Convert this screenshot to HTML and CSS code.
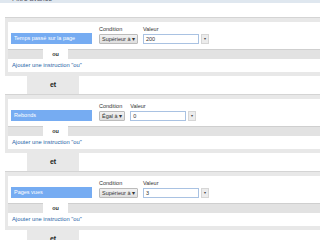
FILE: index.html
```html
<!DOCTYPE html>
<html lang="fr">
<head>
    <meta charset="UTF-8">
    <title>Instructions</title>
    <link rel="stylesheet" href="styles.css">
</head>
<body>

<div class="topbar"><span>Filtre avancé</span></div>

<div class="rules">
    <div class="rule">
        <div class="rule-card">
            <div class="metric">Temps passé sur la page</div>
            <div class="field">
                <label>Condition</label>
                <div class="select">Supérieur à &#9662;</div>
            </div>
            <div class="field">
                <label>Valeur</label>
                <div class="value-row">
                    <div class="input wide">200</div>
                    <div class="drop">&#9662;</div>
                </div>
            </div>
        </div>
        <div class="or-row">
            <div class="or-bar short"></div>
            <div class="or-tab">ou</div>
            <div class="or-bar"></div>
        </div>
        <div class="add-row"><a href="#">Ajouter une instruction "ou"</a></div>
    </div>
    <div class="and-tab">et</div>

    <div class="rule">
        <div class="rule-card">
            <div class="metric">Rebonds</div>
            <div class="field">
                <label>Condition</label>
                <div class="select">Égal à &#9662;</div>
            </div>
            <div class="field">
                <label>Valeur</label>
                <div class="value-row">
                    <div class="input wide">0</div>
                    <div class="drop">&#9662;</div>
                </div>
            </div>
        </div>
        <div class="or-row">
            <div class="or-bar short"></div>
            <div class="or-tab">ou</div>
            <div class="or-bar"></div>
        </div>
        <div class="add-row"><a href="#">Ajouter une instruction "ou"</a></div>
    </div>
    <div class="and-tab">et</div>

    <div class="rule">
        <div class="rule-card">
            <div class="metric">Pages vues</div>
            <div class="field">
                <label>Condition</label>
                <div class="select">Supérieur à &#9662;</div>
            </div>
            <div class="field">
                <label>Valeur</label>
                <div class="value-row">
                    <div class="input wide">3</div>
                    <div class="drop">&#9662;</div>
                </div>
            </div>
        </div>
        <div class="or-row">
            <div class="or-bar short"></div>
            <div class="or-tab">ou</div>
            <div class="or-bar"></div>
        </div>
        <div class="add-row"><a href="#">Ajouter une instruction "ou"</a></div>
    </div>
    <div class="and-tab">et</div>
</div>

</body>
</html>
```

FILE: styles.css
```css
body {
    margin: 0;
    background: #fff;
    font-family: "Liberation Sans", Arial, sans-serif;
    color: #222;
    overflow: hidden;
}
.topbar {
    height: 3px;
    background: #dfe7ef;
    overflow: hidden;
    padding-left: 12px;
}
.topbar span {
    display: block;
    font-size: 7px;
    line-height: 7px;
    margin-top: -5px;
    color: #556;
}
.rules {
    margin-top: 14px;
    margin-left: 5px;
}
.rule {
    background: #e8e8e8;
    border-top: 1px solid #d4d4d4;
    padding: 4px 0 4px 3px;
}
.rule-card {
    background: #fff;
    height: 27px;
    box-sizing: border-box;
    display: flex;
    align-items: flex-end;
    padding: 0 0 5px 3px;
}
.metric {
    width: 78px;
    height: 11px;
    line-height: 11px;
    padding-left: 3px;
    background: #76acf2;
    color: #fff;
    font-size: 5.5px;
}
.field {
    display: flex;
    flex-direction: column;
    margin-left: 7px;
}
.field + .field {
    margin-left: 5px;
}
.field label {
    font-size: 5.5px;
    line-height: 7px;
    color: #333;
    margin-bottom: 1px;
}
.select {
    height: 10px;
    box-sizing: border-box;
    line-height: 8px;
    padding: 0 2px;
    border: 1px solid #bbb;
    border-radius: 1px;
    background: linear-gradient(#f2f2f2, #dedede);
    font-size: 5.5px;
    color: #333;
}
.value-row {
    display: flex;
    align-items: center;
}
.input {
    width: 56px;
    height: 10px;
    box-sizing: border-box;
    line-height: 8px;
    padding-left: 2px;
    border: 1px solid #a9c2e2;
    background: #fff;
    font-size: 5.5px;
    color: #333;
}
.drop {
    width: 6px;
    height: 8px;
    margin-left: 2px;
    line-height: 8px;
    text-align: center;
    font-size: 4px;
    color: #444;
    background: #ececec;
    border: 1px solid #d6d6d6;
}
.or-row {
    display: flex;
    height: 10px;
    background: #fff;
}
.or-bar {
    flex: 1;
    background: #e2e2e2;
    border-top: 1px solid #cfcfcf;
}
.or-bar.short {
    flex: none;
    width: 35px;
}
.or-tab {
    width: 25px;
    text-align: center;
    font-size: 5.5px;
    font-weight: bold;
    line-height: 10px;
    color: #333;
}
.add-row {
    background: #fff;
    height: 13px;
    line-height: 13px;
    padding-left: 4px;
    font-size: 5.8px;
}
.add-row a {
    color: #1f5fa6;
    text-decoration: none;
}
.and-tab {
    margin-left: 22px;
    width: 52px;
    height: 18px;
    line-height: 18px;
    background: #e8e8e8;
    text-align: center;
    font-size: 7px;
    font-weight: bold;
    color: #222;
}
```
